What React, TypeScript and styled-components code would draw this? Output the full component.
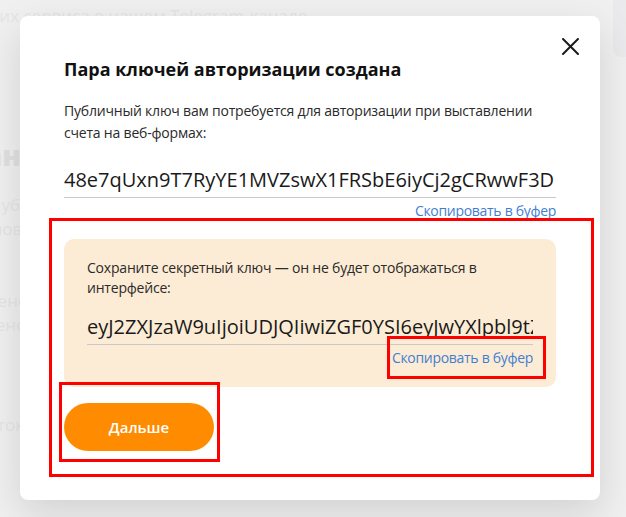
import React from "react";
import styled, { createGlobalStyle } from "styled-components";

const GlobalStyle = createGlobalStyle`
  html, body {
    margin: 0;
    padding: 0;
    width: 626px;
    height: 517px;
    overflow: hidden;
    background: #f0f0f0;
    font-family: "Open Sans", "Noto Sans", sans-serif;
  }
`;

const Page = styled.div`
  position: relative;
  width: 626px;
  height: 517px;
  overflow: hidden;
  background: #f0f0f0;
`;

const BgContent = styled.div`
  display: flex;
  flex-direction: column;
  padding-top: 4px;
`;

const BgLine = styled.div<{ $bold?: boolean; $top?: number; $shift: number }>`
  margin-top: ${({ $top }) => $top ?? 0}px;
  margin-left: -${({ $shift }) => $shift}px;
  font-size: ${({ $bold }) => ($bold ? 28 : 17)}px;
  font-weight: ${({ $bold }) => ($bold ? 800 : 400)};
  line-height: ${({ $bold }) => ($bold ? 34 : 24)}px;
  white-space: nowrap;
  color: ${({ $bold }) => ($bold ? "#e1e1e1" : "#e5e5e5")};
`;

const SideCard = styled.div`
  position: absolute;
  top: 0;
  right: -20px;
  width: 33px;
  height: 57px;
  border-radius: 0 0 8px 8px;
  background: #eaeaed;
`;

const Overlay = styled.div`
  position: absolute;
  inset: 0;
  padding: 16px 26px 0 20px;
`;

const Modal = styled.div`
  position: relative;
  box-sizing: border-box;
  width: 580px;
  height: 484px;
  padding: 41px 44px 48px;
  background: #ffffff;
  border-radius: 8px;
  box-shadow: 0 14px 40px rgba(0, 0, 0, 0.13);
  color: #1e1e1e;
`;

const CloseButton = styled.button`
  position: absolute;
  top: 18px;
  right: 18px;
  width: 24px;
  height: 24px;
  padding: 0;
  border: 0;
  background: none;
  display: flex;
  align-items: center;
  justify-content: center;
  cursor: pointer;
`;

const Title = styled.h2`
  margin: 0 0 19px;
  font-size: 18px;
  line-height: 24px;
  font-weight: 700;
  color: #111;
`;

const Text = styled.p`
  margin: 0;
  font-size: 14px;
  line-height: 22px;
  letter-spacing: -0.2px;
  color: #2a2a2a;
`;

const KeyField = styled.div<{ $gap: number }>`
  margin-top: ${({ $gap }) => $gap}px;
  padding-bottom: 4px;
  border-bottom: 1px solid #c9c9c9;
  font-size: 20px;
  line-height: 26px;
  color: #1a1a1a;
  white-space: nowrap;
  overflow: hidden;
`;

const CopyLink = styled.a`
  display: block;
  margin-top: 3px;
  margin-left: auto;
  width: max-content;
  font-size: 14px;
  line-height: 20px;
  letter-spacing: -0.3px;
  color: #3f7fd1;
  text-decoration: none;
  cursor: pointer;
`;

const SecretBox = styled.div`
  display: flex;
  flex-direction: column;
  margin-top: 18px;
  padding: 19px 23px 19px;
  border-radius: 10px;
  background: #fdecd5;
`;

const SecretText = styled(Text)`
  line-height: 20px;
`;

const Actions = styled.div`
  margin-top: 16px;
  display: flex;
`;

const PrimaryButton = styled.button`
  width: 150px;
  height: 48px;
  border: 0;
  border-radius: 24px;
  background: #ff8c00;
  color: #fff;
  font-family: inherit;
  font-size: 15px;
  font-weight: 600;
  cursor: pointer;
`;

const Highlight = styled.div<{ $l: number; $t: number; $w: number; $h: number }>`
  position: absolute;
  left: ${({ $l }) => $l}px;
  top: ${({ $t }) => $t}px;
  width: ${({ $w }) => $w}px;
  height: ${({ $h }) => $h}px;
  box-sizing: border-box;
  border: 3px solid #ff0000;
  pointer-events: none;
`;

export default function App() {
  return (
    <>
      <GlobalStyle />
      <Page>
        <BgContent>
          <BgLine $shift={36}>наших сервиса в нашем Telegram-канале</BgLine>
          <BgLine $bold $shift={38} $top={110}>Данные магазина</BgLine>
          <BgLine $shift={11} $top={21}>Публичный ключ</BgLine>
          <BgLine $shift={26}>Условия подключения</BgLine>
          <BgLine $shift={36} $top={48}>Изменения</BgLine>
          <BgLine $shift={38}>Изменения настроек</BgLine>
          <BgLine $shift={36} $top={76}>Протокола</BgLine>
        </BgContent>
        <SideCard />
        <Overlay>
          <Modal>
            <CloseButton aria-label="Закрыть">
              <svg width="17" height="17" viewBox="0 0 17 17">
                <path d="M1 1 L16 16 M16 1 L1 16" stroke="#1a1a1a" strokeWidth="2" strokeLinecap="round" />
              </svg>
            </CloseButton>
            <Title>Пара ключей авторизации создана</Title>
            <Text>
              Публичный ключ вам потребуется для авторизации при выставлении счета на веб-формах:
            </Text>
            <KeyField $gap={23}>48e7qUxn9T7RyYE1MVZswX1FRSbE6iyCj2gCRwwF3D</KeyField>
            <CopyLink>Скопировать в буфер</CopyLink>
            <SecretBox>
              <SecretText>
                Сохраните секретный ключ — он не будет отображаться в интерфейсе:
              </SecretText>
              <KeyField $gap={16}>
                eyJ2ZXJzaW9uIjoiUDJQIiwiZGF0YSI6eyJwYXlpbl9tZXJjaGFudF9zaXRlX3VpZCI6IjEyMyJ9fQ
              </KeyField>
              <CopyLink>Скопировать в буфер</CopyLink>
            </SecretBox>
            <Actions>
              <PrimaryButton>Дальше</PrimaryButton>
            </Actions>
            <Highlight $l={29} $t={202} $w={545} $h={259} />
            <Highlight $l={367} $t={320} $w={159} $h={43} />
            <Highlight $l={39} $t={366} $w={161} $h={80} />
          </Modal>
        </Overlay>
      </Page>
    </>
  );
}
